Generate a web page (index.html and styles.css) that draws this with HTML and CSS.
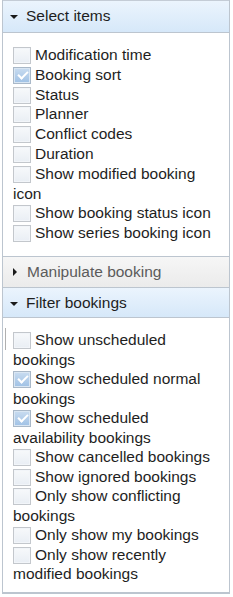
FILE: index.html
```html
<!DOCTYPE html>
<html lang="en">
<head>
  <meta charset="UTF-8">
  <meta name="viewport" content="width=device-width, initial-scale=1.0">
  <title>Booking options</title>
  <link rel="stylesheet" href="styles.css">
</head>
<body>
  <div class="accordion">
    <!-- Select items -->
    <div class="acc-header open"><span class="caret"></span>Select items</div>
    <div class="acc-content items">
      <label class="item"><input type="checkbox">Modification time</label>
      <label class="item"><input type="checkbox" checked>Booking sort</label>
      <label class="item"><input type="checkbox">Status</label>
      <label class="item"><input type="checkbox">Planner</label>
      <label class="item"><input type="checkbox">Conflict codes</label>
      <label class="item"><input type="checkbox">Duration</label>
      <label class="item"><input type="checkbox">Show modified booking icon</label>
      <label class="item"><input type="checkbox">Show booking status icon</label>
      <label class="item"><input type="checkbox">Show series booking icon</label>
    </div>

    <!-- Manipulate booking (collapsed) -->
    <div class="acc-header closed"><span class="caret"></span>Manipulate booking</div>

    <!-- Filter bookings -->
    <div class="acc-header open"><span class="caret"></span>Filter bookings</div>
    <div class="acc-content filters">
      <span class="focus-mark"></span>
      <label class="item"><input type="checkbox">Show unscheduled bookings</label>
      <label class="item"><input type="checkbox" checked>Show scheduled normal bookings</label>
      <label class="item"><input type="checkbox" checked>Show scheduled availability bookings</label>
      <label class="item"><input type="checkbox">Show cancelled bookings</label>
      <label class="item"><input type="checkbox">Show ignored bookings</label>
      <label class="item"><input type="checkbox">Only show conflicting bookings</label>
      <label class="item"><input type="checkbox">Only show my bookings</label>
      <label class="item"><input type="checkbox">Only show recently modified bookings</label>
    </div>
  </div>
</body>
</html>
```

FILE: styles.css
```css
* {
  margin: 0;
  padding: 0;
  box-sizing: border-box;
}

body {
  font-family: "Liberation Sans", Arial, sans-serif;
  font-size: 15.5px;
  color: #1e1e1e;
  background: #fff;
}

/* Accordion wrapper */
.accordion {
  margin-left: 2px;
  width: 228px;
  border: 1px solid #bcc5cf;
  border-top: none;
}

/* Section headers */
.acc-header {
  display: flex;
  align-items: center;
  height: 30px;
  padding-left: 7px;
  border-bottom: 1px solid #bcc5cf;
  white-space: nowrap;
}

.acc-header:first-child {
  height: 33px;
  padding-bottom: 1px;
  border-top: 1px solid #c4ccd6;
}

.acc-header.open {
  background: linear-gradient(#ebf4fd, #d6e8f9);
  color: #1e1e1e;
}

.acc-header.closed {
  height: 31px;
  background: linear-gradient(#f6f6f6, #ebebeb);
  color: #5b5b5b;
}

.caret {
  display: inline-block;
  width: 8px;
  margin-right: 8px;
}

.open .caret {
  border-left: 4px solid transparent;
  border-right: 4px solid transparent;
  border-top: 4px solid #1a1a1a;
  margin-top: 2px;
}

.closed .caret {
  width: 0;
  margin-left: 3px;
  margin-right: 10px;
  border-top: 4px solid transparent;
  border-bottom: 4px solid transparent;
  border-left: 4px solid #1a1a1a;
}

/* Section content */
.acc-content {
  position: relative;
  padding: 12px 8px 0 10px;
  line-height: 19.8px;
  border-bottom: 1px solid #bcc5cf;
}

.acc-content.items {
  height: 224px;
}

.acc-content.filters {
  padding-top: 12px;
  height: 275px;
  line-height: 19.5px;
}

.focus-mark {
  position: absolute;
  left: 2px;
  top: 10px;
  width: 1px;
  height: 22px;
  background: #b0b0b0;
}

.item {
  display: block;
}

/* Checkboxes */
.item input {
  appearance: none;
  -webkit-appearance: none;
  position: relative;
  width: 18px;
  height: 17px;
  margin: 0 4px 0 0;
  vertical-align: -4px;
  border: 1px solid #c3c7cc;
  background: linear-gradient(#f7f9fb, #e9eef4);
  box-shadow: inset 0 0 0 1px #f2f5f9;
}

.item input:checked {
  border-color: #a9b8c8;
  background: linear-gradient(#c9dcf0, #9fc1e5);
  box-shadow: inset 0 0 0 1px #d9e6f3;
}

.item input:checked::after {
  content: "";
  position: absolute;
  left: 4px;
  top: 3px;
  width: 8px;
  height: 4px;
  border-left: 2px solid #fff;
  border-bottom: 2px solid #fff;
  transform: rotate(-45deg);
}
```
